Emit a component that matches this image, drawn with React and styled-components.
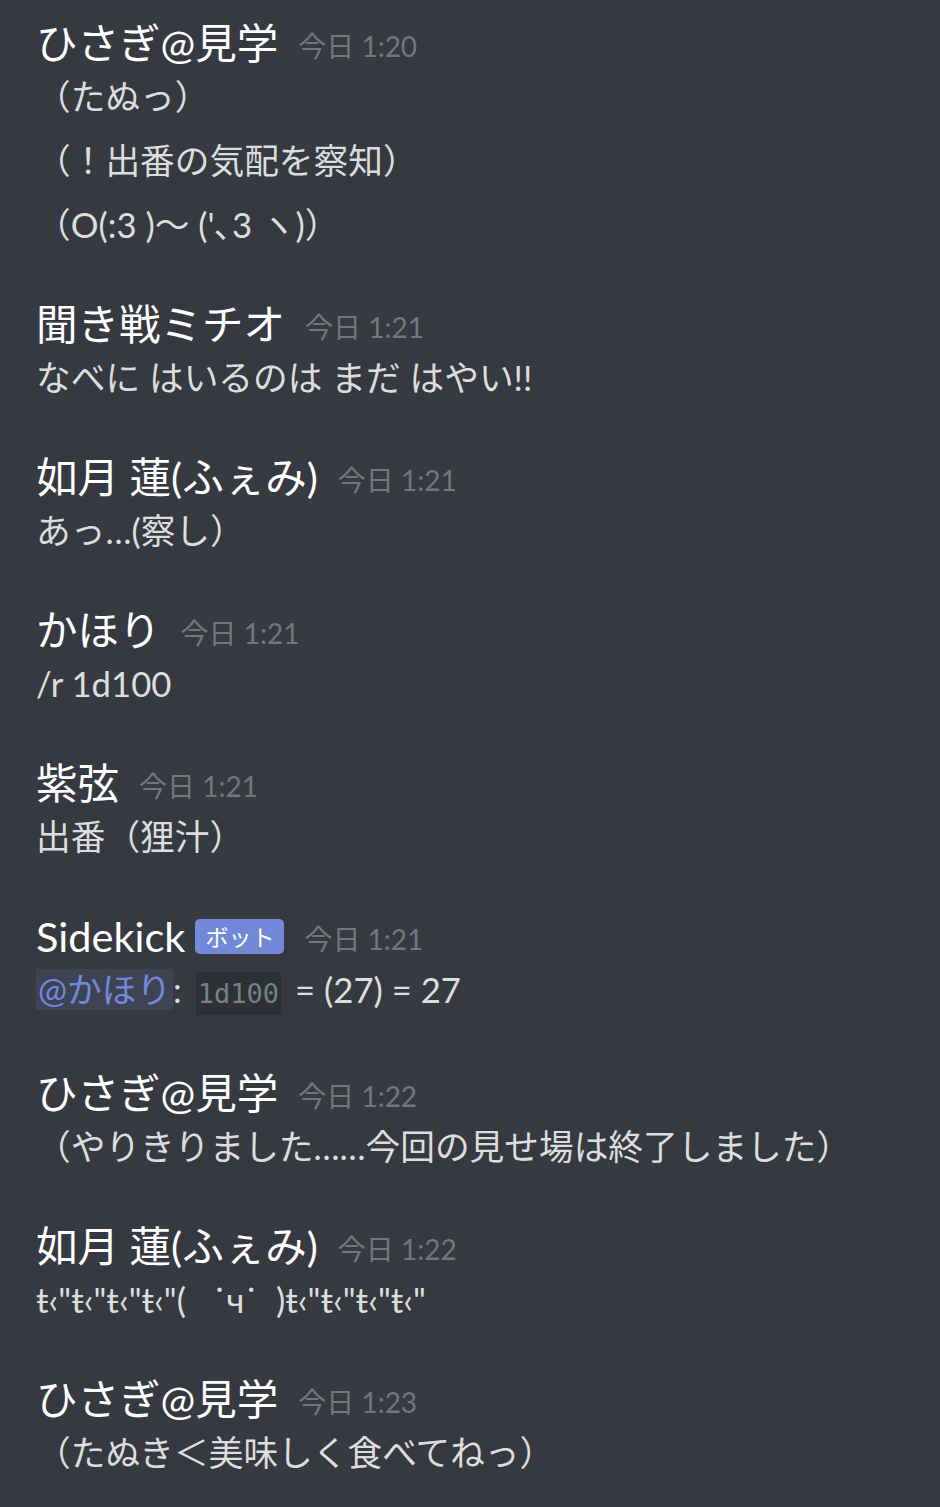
import React from "react";
import styled, { createGlobalStyle } from "styled-components";

const GlobalStyle = createGlobalStyle`
  html, body {
    margin: 0;
    padding: 0;
    background: #36393f;
  }
  body {
    font-family: Lato, "Noto Sans CJK JP", sans-serif;
  }
`;

const Chat = styled.div`
  min-height: 1507px;
  box-sizing: border-box;
  padding: 15px 36px 0 36px;
  display: flex;
  flex-direction: column;
  gap: 45px;
  background: #36393f;
`;

const Group = styled.section`
  display: flex;
  flex-direction: column;
`;

const Header = styled.div`
  display: flex;
  align-items: center;
  height: 56px;
`;

const Name = styled.span`
  font-size: 41.5px;
  font-weight: 400;
  color: #ffffff;
  line-height: 56px;
  white-space: nowrap;
`;

const BotTag = styled.span`
  margin-left: 10px;
  height: 35px;
  padding: 0 10px;
  display: inline-flex;
  align-items: center;
  background: #7289da;
  border-radius: 5px;
  color: #ffffff;
  font-size: 23px;
  font-weight: 400;
`;

const Time = styled.span`
  margin-left: 20px;
  margin-top: 4px;
  font-size: 28px;
  color: #72767d;
  white-space: nowrap;
`;

const Line = styled.div`
  font-size: 34.7px;
  line-height: 52px;
  color: #dcddde;
  white-space: pre;
  & + & {
    margin-top: 12px;
  }
`;

const Mention = styled.span`
  color: #7289da;
  background: rgba(114, 137, 218, 0.12);
  padding: 0 2px;
`;

const Code = styled.code`
  font-family: "DejaVu Sans Mono", "Liberation Mono", monospace;
  font-size: 27px;
  color: #6f8487;
  background: #2e3035;
  padding: 6px 2px;
  margin: 0 14px 0 14px;
`;

const messages = [
  {
    name: "ひさぎ@見学",
    time: "今日 1:20",
    lines: ["（たぬっ）", "（！出番の気配を察知）", "（O(:3 )〜 ('､3 ヽ)）"],
  },
  { name: "聞き戦ミチオ", time: "今日 1:21", lines: ["なべに はいるのは まだ はやい!!"] },
  { name: "如月 蓮(ふぇみ)", time: "今日 1:21", lines: ["あっ…(察し）"] },
  { name: "かほり", time: "今日 1:21", lines: ["/r 1d100"] },
  { name: "紫弦", time: "今日 1:21", lines: ["出番（狸汁）"] },
  {
    name: "Sidekick",
    bot: true,
    time: "今日 1:21",
    lines: [
      <>
        <Mention>@かほり</Mention>:<Code>1d100</Code>= (27) = 27
      </>,
    ],
  },
  {
    name: "ひさぎ@見学",
    time: "今日 1:22",
    lines: ["（やりきりました……今回の見せ場は終了しました）"],
  },
  {
    name: "如月 蓮(ふぇみ)",
    time: "今日 1:22",
    lines: ["ŧ‹\"ŧ‹\"ŧ‹\"ŧ‹\"(   ˙ч˙  )ŧ‹\"ŧ‹\"ŧ‹\"ŧ‹\""],
  },
  { name: "ひさぎ@見学", time: "今日 1:23", lines: ["（たぬき＜美味しく食べてねっ）"] },
];

export default function App() {
  return (
    <>
      <GlobalStyle />
      <Chat>
        {messages.map((m, i) => (
          <Group key={i}>
            <Header>
              <Name>{m.name}</Name>
              {m.bot && <BotTag>ボット</BotTag>}
              <Time>{m.time}</Time>
            </Header>
            {m.lines.map((l, j) => (
              <Line key={j}>{l}</Line>
            ))}
          </Group>
        ))}
      </Chat>
    </>
  );
}
